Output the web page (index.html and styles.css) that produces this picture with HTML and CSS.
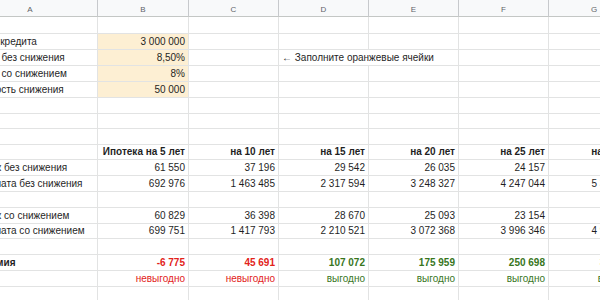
FILE: index.html
```html
<!DOCTYPE html>
<html lang="ru">
<head>
<meta charset="utf-8">
<title>Ипотека</title>
<link rel="stylesheet" href="styles.css">
</head>
<body>
<div class="viewport">
  <div class="sheet">
    <div class="ch">A</div><div class="ch">B</div><div class="ch">C</div><div class="ch">D</div><div class="ch">E</div><div class="ch">F</div><div class="ch">G</div>

    <div class="c"></div><div class="c"></div><div class="c"></div><div class="c"></div><div class="c"></div><div class="c"></div><div class="c"></div>

    <div class="c">Сумма кредита</div><div class="c n in">3 000 000</div><div class="c"></div><div class="c"></div><div class="c"></div><div class="c"></div><div class="c"></div>

    <div class="c">Ставка без снижения</div><div class="c n in">8,50%</div><div class="c"></div><div class="c span2">← Заполните оранжевые ячейки</div><div class="c"></div><div class="c"></div>

    <div class="c">Ставка со снижением</div><div class="c n in">8%</div><div class="c"></div><div class="c"></div><div class="c"></div><div class="c"></div><div class="c"></div>

    <div class="c">Стоимость снижения</div><div class="c n in">50 000</div><div class="c"></div><div class="c"></div><div class="c"></div><div class="c"></div><div class="c"></div>

    <div class="c"></div><div class="c"></div><div class="c"></div><div class="c"></div><div class="c"></div><div class="c"></div><div class="c"></div>
    <div class="c"></div><div class="c"></div><div class="c"></div><div class="c"></div><div class="c"></div><div class="c"></div><div class="c"></div>
    <div class="c"></div><div class="c"></div><div class="c"></div><div class="c"></div><div class="c"></div><div class="c"></div><div class="c"></div>

    <div class="c"></div><div class="c n b">Ипотека на 5 лет</div><div class="c n b">на 10 лет</div><div class="c n b">на 15 лет</div><div class="c n b">на 20 лет</div><div class="c n b">на 25 лет</div><div class="c n b">на 30 лет</div>

    <div class="c">Платёж без снижения</div><div class="c n">61 550</div><div class="c n">37 196</div><div class="c n">29 542</div><div class="c n">26 035</div><div class="c n">24 157</div><div class="c n">23 067</div>

    <div class="c">Переплата без снижения</div><div class="c n">692 976</div><div class="c n">1 463 485</div><div class="c n">2 317 594</div><div class="c n">3 248 327</div><div class="c n">4 247 044</div><div class="c n">5 304 264</div>

    <div class="c"></div><div class="c"></div><div class="c"></div><div class="c"></div><div class="c"></div><div class="c"></div><div class="c"></div>

    <div class="c">Платёж со снижением</div><div class="c n">60 829</div><div class="c n">36 398</div><div class="c n">28 670</div><div class="c n">25 093</div><div class="c n">23 154</div><div class="c n">22 013</div>

    <div class="c">Переплата со снижением</div><div class="c n">699 751</div><div class="c n">1 417 793</div><div class="c n">2 210 521</div><div class="c n">3 072 368</div><div class="c n">3 996 346</div><div class="c n">4 924 644</div>

    <div class="c"></div><div class="c"></div><div class="c"></div><div class="c"></div><div class="c"></div><div class="c"></div><div class="c"></div>

    <div class="c b">Экономия</div><div class="c n b bad">-6 775</div><div class="c n b bad">45 691</div><div class="c n b good">107 072</div><div class="c n b good">175 959</div><div class="c n b good">250 698</div><div class="c n b good">379 620</div>

    <div class="c"></div><div class="c n bad">невыгодно</div><div class="c n bad">невыгодно</div><div class="c n good">выгодно</div><div class="c n good">выгодно</div><div class="c n good">выгодно</div><div class="c n good">выгодно</div>

    <div class="c"></div><div class="c"></div><div class="c"></div><div class="c"></div><div class="c"></div><div class="c"></div><div class="c"></div>
  </div>
</div>
</body>
</html>
```
FILE: styles.css
```css
html, body {
  margin: 0;
  padding: 0;
  background: #ffffff;
}

.viewport {
  width: 600px;
  height: 300px;
  overflow: hidden;
  background: #ffffff;
}

/* sheet is scrolled 37px to the right, as in the screenshot */
.sheet {
  display: grid;
  grid-template-columns: 135px 91px 90px 90px 90px 90px 91px;
  grid-template-rows: 17px 17px 16px 16px 16px 16px 16px 15px 16px 15px 16px 16px 16px 16px 15px 16px 16px 16px 16px;
  width: max-content;
  margin-left: -37px;
  font-family: "Liberation Sans", Arial, sans-serif;
  font-size: 10px;
  color: #1f1f1f;
}

.ch {
  box-sizing: border-box;
  background: #f8f9fa;
  border-right: 1px solid #c7c9cc;
  border-bottom: 1px solid #c4c7c5;
  display: flex;
  align-items: center;
  justify-content: center;
  padding-top: 2px;
  font-family: "Liberation Sans", Arial, sans-serif;
  font-size: 8px;
  color: #5f6368;
}

.c {
  box-sizing: border-box;
  border-right: 1px solid #e2e3e3;
  border-bottom: 1px solid #e2e3e3;
  display: flex;
  align-items: flex-end;
  padding: 0 3px 2px 3px;
  line-height: 11px;
  white-space: nowrap;
  overflow: hidden;
}

.n {
  justify-content: flex-end;
}

.b {
  font-weight: bold;
}

.in {
  background: #fdefd3;
}

.span2 {
  grid-column: span 2;
}

.bad {
  color: #e2231a;
}

.good {
  color: #38761d;
}
```
